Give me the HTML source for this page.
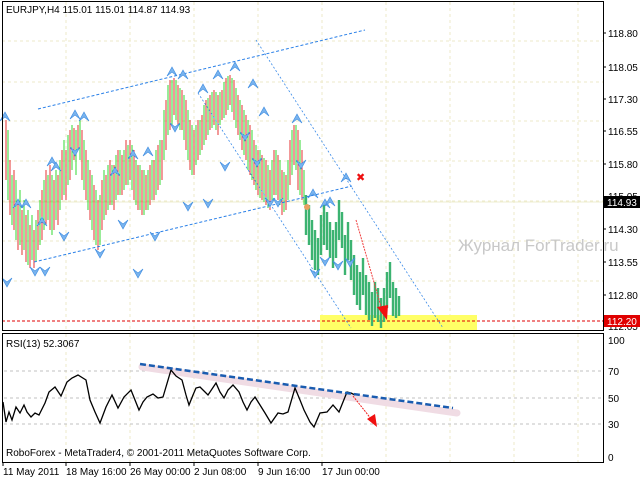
<!DOCTYPE html>
<html><head><meta charset="utf-8"><style>
body{margin:0;background:#fff;width:640px;height:480px;overflow:hidden;font-family:"Liberation Sans",sans-serif}
svg{position:absolute;left:0;top:0}
text{font-family:"Liberation Sans","DejaVu Sans",sans-serif;font-size:10px;fill:#000}
</style></head><body>
<svg width="640" height="480" viewBox="0 0 640 480">
<defs>
<path id="u" d="M-5 8 L0 -1 L5 8 L0 4 Z" fill="#7ab4ee" stroke="#3a8ae0" stroke-width="0.6"/>
<path id="d" d="M-5 -8 L0 1 L5 -8 L0 -4 Z" fill="#7ab4ee" stroke="#3a8ae0" stroke-width="0.6"/>
</defs>
<rect width="640" height="480" fill="#fff"/>
<g stroke="#eeeac8" stroke-dasharray="3,3" stroke-width="1">
<path d="M66 2V330M130 2V330M194 2V330M258 2V330M322 2V330M386 2V330M450 2V330M514 2V330M578 2V330"/>
<path d="M2 41H603M2 82H603M2 121H603M2 161H603M2 201H603M2 241H603M2 281H603"/>
<path d="M66 334V462M130 334V462M194 334V462M258 334V462M322 334V462M386 334V462M450 334V462M514 334V462M578 334V462"/>
</g>
<g stroke="#c0c0c0" stroke-dasharray="3,3"><path d="M4 371H603M4 398H603M4 424H603"/></g>
<line x1="2" y1="202" x2="603" y2="202" stroke="#eeeed0"/>
<rect x="320" y="315" width="157" height="15" fill="#ffff66"/>
<line x1="2" y1="321" x2="603" y2="321" stroke="#e00000" stroke-dasharray="3,2"/>
<path stroke="#e00000" stroke-width="0.8" fill="none" d="M6 120V180M10 160V215M14 170V230M18 200V250M22 210V255M26 215V262M30 225V268M34 230V268M38 210V250M42 190V240M46 170V225M50 165V230M54 180V230M58 175V225M62 150V200M66 150V200M70 130V180M74 128V160M78 125V150M82 130V180M86 150V200M90 170V220M94 185V240M98 200V250M102 180V230M106 175V215M110 160V205M114 165V210M118 150V195M122 155V195M126 140V185M130 140V180M134 150V200M138 165V210M142 170V215M146 175V210M150 165V205M154 160V200M158 145V190M162 140V180M166 100V150M170 80V130M174 78V115M178 85V125M182 90V130M186 100V150M190 120V170M194 130V175M198 120V160M202 115V150M206 100V140M210 95V130M214 90V125M218 95V135M222 90V120M226 78V115M230 75V105M234 80V120M238 95V135M242 105V150M246 115V160M250 125V175M254 140V185M258 150V195M262 155V200M266 160V205M270 170V210M274 150V195M278 155V200M282 170V215M286 175V210M290 140V185M294 125V165M298 130V190M302 150V200"/>
<path stroke="#00d000" stroke-width="0.8" fill="none" d="M8 130V200M12 175V225M16 180V240M20 190V245M24 200V250M28 210V265M32 215V260M36 220V262M40 200V245M44 180V230M48 175V220M52 175V235M56 170V220M60 160V210M64 140V195M68 135V185M72 125V170M76 130V175M80 120V160M84 140V190M88 160V210M92 175V230M96 190V245M100 195V245M104 170V220M108 165V210M112 165V205M116 155V200M120 150V195M124 150V190M128 145V185M132 145V190M136 160V205M140 165V210M144 170V215M148 170V210M152 160V200M156 150V195M160 140V185M164 110V160M168 85V135M172 80V125M176 80V120M180 88V130M184 95V140M188 110V160M192 125V175M196 125V165M200 120V155M204 105V145M208 98V135M212 92V128M216 92V130M220 92V125M224 82V118M228 76V110M232 78V112M236 88V128M240 100V140M244 110V155M248 120V170M252 130V180M256 145V190M260 150V198M264 158V202M268 165V208M272 160V200M276 150V195M280 160V205M284 172V212M288 160V200M292 130V175M296 125V170M300 140V195M304 170V205"/>
<path stroke="#3cb371" stroke-width="2.4" fill="none" d="M306 195V235M309 205V245M312 220V260M315 230V270M318 238V275M321 215V255M324 205V245M327 212V250M330 222V258M333 230V268M336 222V258M339 200V240M342 212V248M345 235V275M348 222V260M351 240V280M354 255V295M357 265V305M360 272V310M363 258V295M366 275V315M369 282V320M372 292V326M375 282V318M378 288V322M381 298V328M384 288V322M387 272V308M390 262V298M393 282V316M396 288V318M399 296V316"/>
<circle cx="307" cy="207" r="3" fill="#e8a060"/>
<g stroke="#2a80e8" stroke-width="1" stroke-dasharray="3,2" fill="none">
<line x1="38" y1="109" x2="365" y2="30"/>
<line x1="34" y1="262" x2="352" y2="186"/>
</g>
<g stroke="#3a8ae8" stroke-width="0.8" stroke-dasharray="2,2" fill="none">
<line x1="198" y1="93" x2="351" y2="328"/>
<line x1="256" y1="40" x2="443" y2="328"/>
</g>
<g>
<use href="#u" x="5" y="113"/><use href="#u" x="18" y="200"/><use href="#u" x="26" y="200"/><use href="#u" x="42" y="218"/><use href="#u" x="52" y="158"/><use href="#u" x="56" y="163"/><use href="#u" x="75" y="111"/><use href="#u" x="84" y="113"/><use href="#u" x="115" y="168"/><use href="#u" x="133" y="151"/><use href="#u" x="148" y="148"/><use href="#u" x="172" y="68"/><use href="#u" x="183" y="71"/><use href="#u" x="203" y="85"/><use href="#u" x="218" y="71"/><use href="#u" x="235" y="63"/><use href="#u" x="253" y="80"/><use href="#u" x="264" y="108"/><use href="#u" x="297" y="115"/><use href="#u" x="346" y="174"/><use href="#u" x="313" y="190"/><use href="#u" x="325" y="200"/><use href="#u" x="330" y="198"/>
<use href="#d" x="7" y="286"/><use href="#d" x="35" y="275"/><use href="#d" x="45" y="275"/><use href="#d" x="64" y="240"/><use href="#d" x="75" y="155"/><use href="#d" x="100" y="257"/><use href="#d" x="123" y="228"/><use href="#d" x="138" y="277"/><use href="#d" x="155" y="240"/><use href="#d" x="175" y="131"/><use href="#d" x="188" y="210"/><use href="#d" x="208" y="207"/><use href="#d" x="225" y="170"/><use href="#d" x="245" y="140"/><use href="#d" x="257" y="166"/><use href="#d" x="270" y="206"/><use href="#d" x="278" y="206"/><use href="#d" x="301" y="168"/><use href="#d" x="315" y="277"/><use href="#d" x="325" y="265"/><use href="#d" x="338" y="269"/><use href="#d" x="350" y="266"/>
</g>
<text x="356" y="181" style="font-size:11px;fill:#ee1010;font-weight:bold">✖</text>
<line x1="356" y1="220" x2="382" y2="310" stroke="#f04040" stroke-dasharray="2,1"/>
<path d="M377 307 L387 320 L388 305 Z" fill="#f01010"/>
<text x="458" y="251" style="font-size:17px;fill:#c8c8c8">Журнал ForTrader.ru</text>
<g stroke="#000" stroke-width="1" fill="none">
<rect x="2.5" y="1.5" width="601" height="329"/>
<rect x="2.5" y="333.5" width="601" height="129"/>
</g>
<g>
<text x="608" y="37">118.80</text><text x="608" y="71">118.05</text><text x="608" y="103">117.30</text><text x="608" y="135">116.55</text><text x="608" y="168">115.80</text><text x="608" y="200">115.05</text><text x="608" y="233">114.30</text><text x="608" y="266">113.55</text><text x="608" y="299">112.80</text><text x="608" y="330">112.05</text>
</g>
<rect x="604" y="196" width="36" height="12" fill="#000"/><text x="607" y="206" style="fill:#fff">114.93</text>
<rect x="604" y="315" width="36" height="12" fill="#e00000"/><text x="607" y="325" style="fill:#fff">112.20</text>
<g stroke="#000"><path d="M603 33h3M603 67h3M603 99h3M603 131h3M603 164h3M603 229h3M603 262h3M603 295h3"/></g>
<text x="6" y="13">EURJPY,H4  115.01 115.01 114.87 114.93</text>
<text x="6" y="347">RSI(13) 52.3067</text>
<text x="608" y="344">100</text><text x="608" y="375">70</text><text x="608" y="402">50</text><text x="608" y="428">30</text><text x="608" y="461">0</text>
<line x1="142" y1="367" x2="457" y2="413" stroke="#f0dce4" stroke-width="7" stroke-linecap="round"/>
<polyline fill="none" stroke="#000" stroke-width="1.3" points="3,402 6,422 9,412 12,420 16,407 20,413 24,405 27,412 31,417 35,413 39,415 45,403 49,392 55,387 61,396 67,382 72,378 78,375 86,380 90,400 95,412 100,423 106,407 112,395 118,408 124,397 131,390 135,400 139,410 143,402 147,397 153,394 158,398 163,397 171,370 176,376 182,380 186,395 189,405 193,395 196,388 200,387 208,395 216,383 220,392 224,398 228,390 233,385 239,392 243,402 247,410 251,402 255,397 260,405 265,413 271,423 278,413 283,414 288,412 295,388 300,400 304,410 310,422 314,427 320,413 327,412 333,405 339,412 347,392 351,393 355,395"/>
<line x1="140" y1="364" x2="453" y2="408" stroke="#1a5cb0" stroke-width="2.5" stroke-dasharray="6,3"/>
<line x1="353" y1="396" x2="372" y2="420" stroke="#f02020" stroke-dasharray="2,1"/>
<path d="M367 419 L377 427 L375 414 Z" fill="#f01010"/>
<text x="6" y="456">RoboForex - MetaTrader4, © 2001-2011 MetaQuotes Software Corp.</text>
<g><text x="3" y="475">11 May 2011</text><text x="66" y="475">18 May 16:00</text><text x="130" y="475">26 May 00:00</text><text x="194" y="475">2 Jun 08:00</text><text x="258" y="475">9 Jun 16:00</text><text x="322" y="475">17 Jun 00:00</text></g>
<g stroke="#000"><path d="M3 463v3M66 463v3M130 463v3M194 463v3M258 463v3M322 463v3"/></g>
</svg>
</body></html>
